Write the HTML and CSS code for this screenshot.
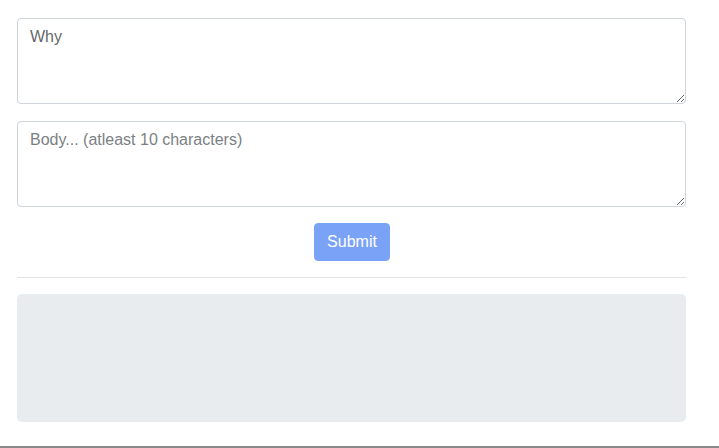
FILE: index.html
```html
<!DOCTYPE html>
<html>
<head>
<meta charset="utf-8">
<link rel="stylesheet" href="styles.css">
</head>
<body>
<div class="container">
  <form class="form">
    <textarea class="field" rows="3">Why</textarea>
    <textarea class="field" rows="3" placeholder="Body... (atleast 10 characters)"></textarea>
    <div class="actions"><button type="button" class="btn" disabled>Submit</button></div>
  </form>
  <hr class="rule">
  <div class="panel"></div>
</div>
<div class="bottom-edge"></div>
</body>
</html>
```
FILE: styles.css
```css
html, body {
  margin: 0;
  padding: 0;
  background: #fff;
}
body {
  font-family: "Liberation Sans", Arial, sans-serif;
  font-size: 16px;
  line-height: 1.5;
  color: #212529;
}
.container {
  margin: 18px 33px 0 17px;
}
.form {
  display: flex;
  flex-direction: column;
  gap: 17px;
}
.field {
  display: block;
  box-sizing: border-box;
  width: 100%;
  height: 86px;
  margin: 0;
  padding: 6px 12px;
  font-family: "Liberation Sans", Arial, sans-serif;
  font-size: 16px;
  line-height: 24px;
  color: #65686c;
  background: #fff;
  border: 1px solid #ced4da;
  border-radius: 4px;
  resize: vertical;
}
.field::placeholder {
  color: #7b7f84;
  opacity: 1;
}
.actions {
  display: flex;
  justify-content: center;
  padding-left: 1px;
  margin-top: -1px;
}
.btn {
  width: 76px;
  height: 38px;
  padding: 0;
  font-family: "Liberation Sans", Arial, sans-serif;
  font-size: 16px;
  color: #fff;
  background: #7aa3f7;
  border: 1px solid #7aa3f7;
  border-radius: 4px;
}
.rule {
  margin: 16px 0 16px;
  border: 0;
  border-top: 1px solid #e3e4e6;
}
.panel {
  height: 128px;
  background: #e9ecef;
  border-radius: 5px;
}
.bottom-edge {
  position: fixed;
  left: 0;
  right: 0;
  bottom: 0;
  height: 2px;
  background: #8a8a8a;
}
```
